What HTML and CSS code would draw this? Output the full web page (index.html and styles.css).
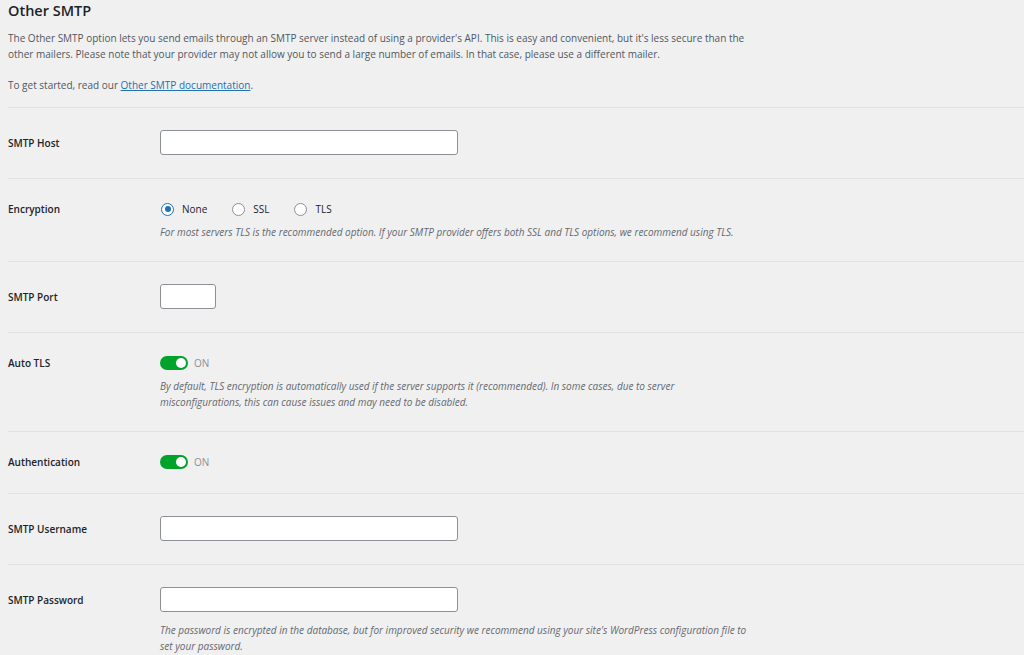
FILE: index.html
```html
<!DOCTYPE html>
<html lang="en">
<head>
  <meta charset="UTF-8" />
  <title>Other SMTP</title>
  <link rel="stylesheet" href="styles.css">
</head>
<body>
  <section class="mailer">
    <h2 class="mailer-title">Other SMTP</h2>
    <p class="intro">The Other SMTP option lets you send emails through an SMTP server instead of using a provider's API. This is easy and convenient, but it's less secure than the other mailers. Please note that your provider may not allow you to send a large number of emails. In that case, please use a different mailer.</p>
    <p class="intro">To get started, read our <a href="#">Other SMTP documentation</a>.</p>
  </section>

  <div class="settings">
    <div class="row">
      <label class="label">SMTP Host</label>
      <div class="control"><input type="text" class="text-input"></div>
    </div>

    <div class="row has-desc">
      <label class="label">Encryption</label>
      <div class="control radios">
        <span class="radio checked"></span><span class="radio-text">None</span>
        <span class="radio"></span><span class="radio-text">SSL</span>
        <span class="radio"></span><span class="radio-text">TLS</span>
      </div>
      <p class="desc">For most servers TLS is the recommended option. If your SMTP provider offers both SSL and TLS options, we recommend using TLS.</p>
    </div>

    <div class="row">
      <label class="label">SMTP Port</label>
      <div class="control"><input type="text" class="text-input small"></div>
    </div>

    <div class="row has-desc">
      <label class="label">Auto TLS</label>
      <div class="control toggle-wrap">
        <span class="toggle"><span class="knob"></span></span>
        <span class="toggle-text">ON</span>
      </div>
      <p class="desc">By default, TLS encryption is automatically used if the server supports it (recommended). In some cases, due to server misconfigurations, this can cause issues and may need to be disabled.</p>
    </div>

    <div class="row">
      <label class="label">Authentication</label>
      <div class="control toggle-wrap">
        <span class="toggle"><span class="knob"></span></span>
        <span class="toggle-text">ON</span>
      </div>
    </div>

    <div class="row">
      <label class="label">SMTP Username</label>
      <div class="control"><input type="text" class="text-input"></div>
    </div>

    <div class="row has-desc">
      <label class="label">SMTP Password</label>
      <div class="control"><input type="password" class="text-input"></div>
      <p class="desc after-input">The password is encrypted in the database, but for improved security we recommend using your site's WordPress configuration file to set your password.</p>
    </div>
  </div>
</body>
</html>
```

FILE: styles.css
```css
body {
  margin: 0;
  padding-left: 8px;
  background-color: #f0f0f1;
  font-family: "Open Sans", "Noto Sans", sans-serif;
  font-size: 10px;
  color: #1d2327;
}
.mailer {
  border-bottom: 1px solid #e2e2e4;
}
.mailer-title {
  margin: 0;
  padding-top: 2px;
  font-size: 14.5px;
  font-weight: 600;
  line-height: 18px;
}
.intro {
  max-width: 745px;
  margin: 10px 0 0;
  line-height: 16px;
  color: #50575e;
}
.intro + .intro {
  margin-top: 15px;
  margin-bottom: 14px;
}
.intro a {
  color: #2271b1;
}

/* filas del formulario */
.row {
  display: grid;
  grid-template-columns: 152px 1fr;
  align-items: center;
  padding: 22px 0 23px;
  border-bottom: 1px solid #e2e2e4;
}
.row.has-desc {
  padding-bottom: 21px;
}
.label {
  font-weight: 600;
  line-height: 16px;
}
.control {
  display: flex;
  align-items: center;
  min-height: 16px;
}
.desc {
  grid-column: 2;
  max-width: 592px;
  margin: 7px 0 0;
  font-style: italic;
  line-height: 16px;
  color: #646970;
}
.desc.after-input {
  margin-top: 10px;
}
.text-input {
  box-sizing: border-box;
  width: 298px;
  height: 25px;
  margin: 0;
  border: 1px solid #8c8f94;
  border-radius: 3px;
  background: #fff;
}
.text-input.small {
  width: 56px;
}

/* radios */
.radio {
  box-sizing: border-box;
  width: 13px;
  height: 13px;
  margin-left: 1px;
  border: 1px solid #8c8f94;
  border-radius: 50%;
  background: #fff;
  position: relative;
}
.radio.checked {
  border-color: #2271b1;
}
.radio.checked::after {
  content: "";
  position: absolute;
  left: 2.5px;
  top: 2.5px;
  width: 6px;
  height: 6px;
  border-radius: 50%;
  background: #2271b1;
}
.radio-text {
  margin: 0 24px 0 8px;
  line-height: 16px;
}

/* interruptor */
.toggle {
  box-sizing: border-box;
  width: 28px;
  height: 14px;
  border-radius: 7px;
  background: #00a32a;
  position: relative;
}
.knob {
  position: absolute;
  right: 2px;
  top: 2px;
  width: 10px;
  height: 10px;
  border-radius: 50%;
  background: #fff;
}
.toggle-text {
  margin-left: 6px;
  font-size: 10px;
  color: #8c8f94;
  line-height: 16px;
}
```
